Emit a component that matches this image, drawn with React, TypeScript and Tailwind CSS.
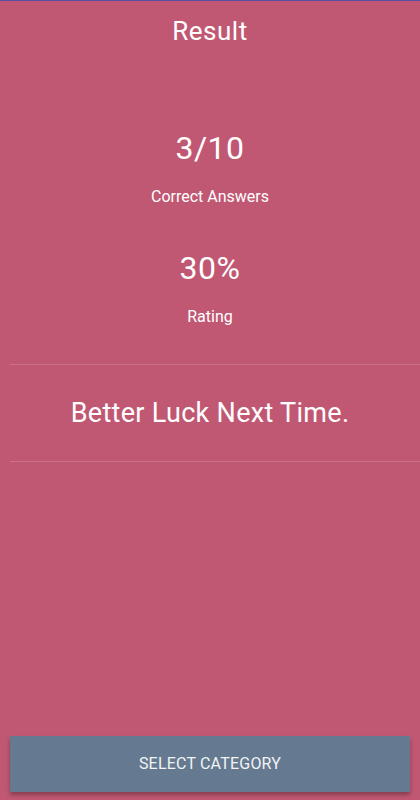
import React from 'react';

export default function App() {
  return (
    <div
      className="flex min-h-[800px] w-full flex-col border-t border-[#5b4fa3] bg-[#c15873] text-white"
      style={{ fontFamily: 'Roboto, "Noto Sans", sans-serif' }}
    >
      <h1 className="mt-[17px] text-center text-[26px] leading-none tracking-[0.5px]">Result</h1>

      <div className="mt-[88px] text-center text-[32px] leading-none tracking-[0.5px]">3/10</div>
      <div className="mt-[25px] text-center text-[16px] leading-none">Correct Answers</div>

      <div className="mt-[47px] text-center text-[32px] leading-none tracking-[0.5px]">30%</div>
      <div className="mt-[25px] text-center text-[16px] leading-none">Rating</div>

      <div className="ml-[10px] mt-[39px] h-px bg-white/15" />
      <div className="mt-[35px] text-center text-[27px] leading-none tracking-[0.3px]">
        Better Luck Next Time.
      </div>
      <div className="ml-[10px] mt-[34px] h-px bg-white/15" />

      <button className="mx-[10px] mb-[8px] mt-auto flex h-[56px] items-center justify-center bg-[#657a90] text-[16px] uppercase tracking-[0.2px] text-[#f1f3f5] shadow-[0_3px_4px_rgba(0,0,0,0.3)]">
        Select Category
      </button>
    </div>
  );
}
